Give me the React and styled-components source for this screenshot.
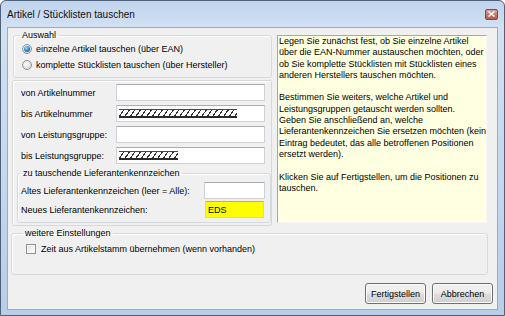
import React from 'react';
import styled, { createGlobalStyle, css } from 'styled-components';

const GlobalStyle = createGlobalStyle`
  html, body {
    margin: 0;
    padding: 0;
    background: #fff;
  }
  body {
    font-family: 'Liberation Sans', Arial, sans-serif;
    font-size: 9px;
    color: #000;
  }
  * {
    box-sizing: border-box;
  }
`;

const Window = styled.div`
  width: 505px;
  height: 316px;
  display: flex;
  flex-direction: column;
  border: 1px solid #4f6079;
  border-radius: 6px 6px 0 0;
  background: linear-gradient(180deg, #c0d4ed 0%, #d2e1f3 26px, #c3d7ee 60%, #b7cee9 100%);
  overflow: hidden;
`;

const TitleBar = styled.div`
  height: 27px;
  flex: none;
  display: flex;
  align-items: center;
  justify-content: space-between;
  padding: 0 6px 0 6px;
  font-size: 10px;
  color: #111;
`;

const CloseButton = styled.span`
  width: 13px;
  height: 11px;
  margin-top: -1px;
  display: flex;
  align-items: center;
  justify-content: center;
  border: 1px solid #84463d;
  border-radius: 2px;
  background: linear-gradient(180deg, #dba59a 0%, #c57a6d 50%, #b25e51 100%);
`;

const Frame = styled.div`
  flex: 1;
  display: flex;
  padding: 0 7px 6px 7px;
`;

const Client = styled.div`
  flex: 1;
  display: flex;
  flex-direction: column;
  background: #f0f0f0;
  box-shadow: 0 0 0 1px #97acc7;
`;

const TopRow = styled.div`
  display: flex;
  align-items: flex-start;
  gap: 5px;
  padding: 2px 0 0 4px;
`;

const LeftCol = styled.div`
  width: 260px;
  display: flex;
  flex-direction: column;
  gap: 2px;
`;

const Group = styled.fieldset`
  margin: ${p => p.$margin || '0'};
  min-width: 0;
  width: ${p => p.$width || 'auto'};
  border: 1px solid #d5dadf;
  border-radius: 3px;
  box-shadow: inset 1px 1px 0 #fff;
  padding: ${p => p.$pad};
  ${p =>
    p.$stack &&
    css`
      display: flex;
      flex-direction: column;
      gap: ${p.$stack}px;
    `}
`;

const Legend = styled.legend`
  padding: 0 2px;
  margin-left: ${p => p.$ml || 0}px;
  line-height: 11px;
  font-size: 9px;
  color: #000;
`;

const OptionRow = styled.label`
  display: flex;
  align-items: center;
  gap: ${p => p.$gap || 4}px;
  height: ${p => p.$h || 16}px;
  white-space: nowrap;
`;

const RadioDot = styled.span`
  width: 10px;
  height: 10px;
  flex: none;
  border-radius: 50%;
  border: 1px solid #8d8f92;
  background: radial-gradient(circle at 40% 35%, #ffffff 0%, #e4e4e4 55%, #cfcfcf 100%);
  display: flex;
  align-items: center;
  justify-content: center;

  &::after {
    content: '';
    width: 6px;
    height: 6px;
    border-radius: 50%;
    display: ${p => (p.$checked ? 'block' : 'none')};
    background: radial-gradient(circle at 40% 35%, #a9e2ff 0%, #2f8fd8 45%, #123f73 100%);
  }
`;

const CheckBox = styled.span`
  width: 10px;
  height: 10px;
  flex: none;
  border: 1px solid #8e8f8f;
  background: linear-gradient(135deg, #dcdcdc 0%, #f4f4f4 60%, #ffffff 100%);
  box-shadow: inset 0 0 0 1px #f6f6f6;
`;

const FieldPanel = styled.div`
  border: 1px solid #d8d8d8;
  border-radius: 2px;
  box-shadow: inset 1px 1px 0 #fff;
  padding: 3px 0 2px 4px;
  display: flex;
  flex-direction: column;
  gap: 4px;
`;

const FieldRow = styled.div`
  display: grid;
  grid-template-columns: ${p => p.$label}px ${p => p.$box}px;
  align-items: center;
  height: 17px;
  padding-left: ${p => p.$indent || 0}px;
  white-space: nowrap;
`;

const TextBox = styled.div`
  height: 17px;
  display: flex;
  align-items: center;
  padding-left: 2px;
  background: ${p => (p.$yellow ? '#ffff00' : '#fff')};
  border: 1px solid #cfd1d6;
  border-top-color: #a9abb1;
  font-size: 9px;
`;

const Hatch = styled.div`
  width: ${p => p.$w}px;
  height: 9px;
  border-top: 1px solid #4a4a4a;
  border-bottom: 2px solid #2a2a2a;
  background: repeating-linear-gradient(125deg, transparent 0 3.4px, #333 3.4px 4.5px);
`;

const HelpPanel = styled.div`
  width: 210px;
  height: 188px;
  margin-top: 5px;
  padding: 0 0 0 1px;
  background: #ffffe1;
  border: 1px solid;
  border-color: #a7a7a7 #f7f7f7 #f7f7f7 #a7a7a7;
  line-height: 11.3px;
  font-size: 9px;
`;

const HelpLine = styled.div`
  white-space: nowrap;
  height: 11.3px;
`;

const ButtonRow = styled.div`
  display: flex;
  justify-content: flex-end;
  gap: 6px;
  margin-top: 8px;
  padding-right: 4px;
`;

const Button = styled.button`
  width: 61px;
  height: 21px;
  padding: 0;
  font-family: inherit;
  font-size: 9px;
  color: #000;
  border: 1px solid #707070;
  border-radius: 3px;
  background: linear-gradient(180deg, #f2f2f2 0%, #ebebeb 48%, #dddddd 52%, #cfcfcf 100%);
  box-shadow: inset 0 0 0 1px #fbfbfb;
`;

const helpText = [
  'Legen Sie zunächst fest, ob Sie einzelne Artikel',
  'über die EAN-Nummer austauschen möchten, oder',
  'ob Sie komplette Stücklisten mit Stücklisten eines',
  'anderen Herstellers tauschen möchten.',
  '',
  'Bestimmen Sie weiters, welche Artikel und',
  'Leistungsgruppen getauscht werden sollten.',
  'Geben Sie anschließend an, welche',
  'Lieferantenkennzeichen Sie ersetzen möchten (kein',
  'Eintrag bedeutet, das alle betroffenen Positionen',
  'ersetzt werden).',
  '',
  'Klicken Sie auf Fertigstellen, um die Positionen zu',
  'tauschen.',
];

const App = () => {
  return (
    <>
      <GlobalStyle />
      <Window>
        <TitleBar>
          <span>Artikel / Stücklisten tauschen</span>
          <CloseButton>
            <svg width="7" height="6" viewBox="0 0 7 6">
              <path d="M0.5 0.5 L6.5 5.5 M6.5 0.5 L0.5 5.5" stroke="#fff" strokeWidth="1.4" />
            </svg>
          </CloseButton>
        </TitleBar>
        <Frame>
          <Client>
            <TopRow>
              <LeftCol>
                <Group $margin="0 0 0 1px" $width="259px" $pad="0 0 4px 8px">
                  <Legend $ml={-2}>Auswahl</Legend>
                  <OptionRow>
                    <RadioDot $checked />
                    einzelne Artikel tauschen (über EAN)
                  </OptionRow>
                  <OptionRow>
                    <RadioDot />
                    komplette Stücklisten tauschen (über Hersteller)
                  </OptionRow>
                </Group>
                <FieldPanel>
                  <FieldRow $label={95} $box={149} $indent={4}>
                    <span>von Artikelnummer</span>
                    <TextBox />
                  </FieldRow>
                  <FieldRow $label={95} $box={149} $indent={4}>
                    <span>bis Artikelnummer</span>
                    <TextBox>
                      <Hatch $w={118} />
                    </TextBox>
                  </FieldRow>
                  <FieldRow $label={95} $box={149} $indent={4}>
                    <span>von Leistungsgruppe:</span>
                    <TextBox />
                  </FieldRow>
                  <FieldRow $label={95} $box={149} $indent={4}>
                    <span>bis Leistungsgruppe:</span>
                    <TextBox>
                      <Hatch $w={59} />
                    </TextBox>
                  </FieldRow>
                  <Group $pad="3px 4px 4px 3px" $stack={2}>
                    <Legend>zu tauschende Lieferantenkennzeichen</Legend>
                    <FieldRow $label={183} $box={61}>
                      <span>Altes Lieferantenkennzeichen (leer = Alle):</span>
                      <TextBox />
                    </FieldRow>
                    <FieldRow $label={184} $box={59}>
                      <span>Neues Lieferantenkennzeichen:</span>
                      <TextBox $yellow>EDS</TextBox>
                    </FieldRow>
                  </Group>
                </FieldPanel>
              </LeftCol>
              <HelpPanel>
                {helpText.map((line, i) => (
                  <HelpLine key={i}>{line}</HelpLine>
                ))}
              </HelpPanel>
            </TopRow>
            <Group $margin="2px 0 0 3px" $width="477px" $pad="4px 0 20px 14px">
              <Legend $ml={-3}>weitere Einstellungen</Legend>
              <OptionRow $h={11} $gap={5}>
                <CheckBox />
                Zeit aus Artikelstamm übernehmen (wenn vorhanden)
              </OptionRow>
            </Group>
            <ButtonRow>
              <Button>Fertigstellen</Button>
              <Button>Abbrechen</Button>
            </ButtonRow>
          </Client>
        </Frame>
      </Window>
    </>
  );
};

export default App;
